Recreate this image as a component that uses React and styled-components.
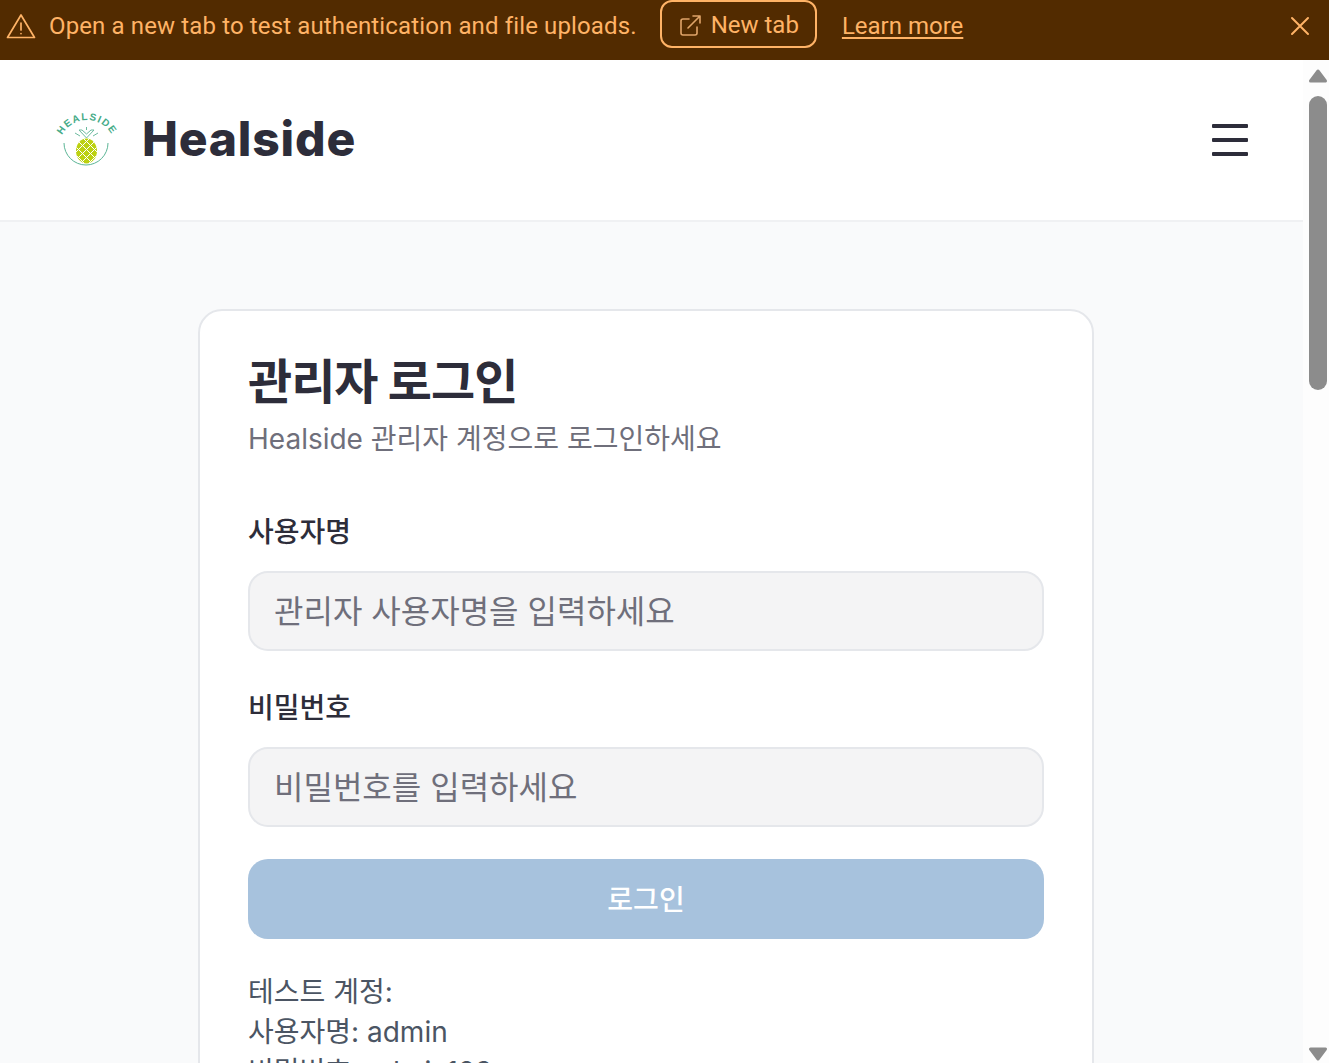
import React from "react";
import styled, { createGlobalStyle } from "styled-components";

const Global = createGlobalStyle`
  html, body { margin: 0; padding: 0; height: 100%; overflow: hidden; }
  * { box-sizing: border-box; }
  body { font-family: Inter, "Noto Sans CJK KR", sans-serif; }
`;

const Page = styled.div`
  display: flex;
  flex-direction: column;
  height: 1063px;
  overflow: hidden;
`;

const Banner = styled.div`
  flex: none;
  display: flex;
  align-items: center;
  height: 60px;
  padding: 0 19px 8px 6px;
  background: #522b00;
  color: #ffb366;
  font-family: Roboto, sans-serif;
  font-size: 24px;
`;

const BannerText = styled.span`
  margin-left: 13px;
  letter-spacing: 0.13px;
`;

const NewTab = styled.div`
  display: flex;
  align-items: center;
  align-self: flex-start;
  gap: 10px;
  height: 48px;
  margin-left: 23px;
  padding: 2px 16px 0 18px;
  border: 2px solid #ffb366;
  border-radius: 12px;
`;

const LearnMore = styled.a`
  margin-left: 25px;
  color: inherit;
  text-decoration: underline;
  text-underline-offset: 3px;
`;

const CloseBtn = styled.div`
  display: flex;
  margin-left: auto;
`;

const Frame = styled.div`
  flex: 1;
  display: flex;
  min-height: 0;
`;

const Content = styled.div`
  flex: 1;
  min-width: 0;
  overflow: hidden;
  background: #f9fafb;
`;

const Header = styled.header`
  display: flex;
  align-items: center;
  justify-content: space-between;
  height: 162px;
  padding: 0 54px 2px 54px;
  background: #fff;
  border-bottom: 2px solid #f0f1f3;
`;

const Brand = styled.div`
  display: flex;
  align-items: center;
  gap: 24px;
`;

const BrandName = styled.span`
  font-size: 48px;
  font-weight: 800;
  letter-spacing: 0.8px;
  line-height: 56px;
  color: #2d2d3a;
`;

const Burger = styled.div`
  display: flex;
  flex-direction: column;
  gap: 10px;
  width: 36px;
  margin: 2px 1px 0 0;
  span {
    height: 4px;
    background: #2d2d3a;
    border-radius: 1px;
  }
`;

const Main = styled.main`
  display: flex;
  padding: 87px 0 0 198px;
`;

const Card = styled.div`
  width: 896px;
  padding: 41px 48px 48px;
  background: #fff;
  border: 2px solid #e5e7eb;
  border-radius: 24px;
`;

const Title = styled.h1`
  margin: 0 0 7px;
  font-size: 48px;
  line-height: 60px;
  font-weight: 700;
  letter-spacing: -1px;
  color: #2d2d3a;
`;

const Subtitle = styled.p`
  margin: 0 0 53px;
  font-size: 28px;
  line-height: 40px;
  color: #6f6f7b;
`;

const Label = styled.label`
  display: block;
  margin-bottom: 19px;
  font-size: 28px;
  line-height: 40px;
  font-weight: 500;
  color: #2d2d3a;
`;

const Input = styled.input`
  display: block;
  width: 100%;
  height: 80px;
  margin-bottom: 37px;
  padding: 0 24px;
  background: #f4f4f5;
  border: 2px solid #e5e7eb;
  border-radius: 20px;
  font-family: inherit;
  font-size: 32px;
  outline: none;
  &::placeholder { color: #6f6f7b; opacity: 1; }
`;

const Submit = styled.button`
  display: block;
  width: 100%;
  height: 80px;
  margin-top: -5px;
  padding-bottom: 3px;
  background: #a7c2dd;
  border: 0;
  border-radius: 20px;
  color: #fff;
  font-family: inherit;
  font-size: 28px;
  font-weight: 500;
`;

const Hint = styled.div`
  margin-top: 33px;
  font-size: 28px;
  line-height: 40px;
  color: #4b5563;
`;

const Rail = styled.div`
  flex: none;
  width: 26px;
  display: flex;
  flex-direction: column;
  align-items: center;
  padding: 8px 0 1px 4px;
  background: #fdfdfd;
`;

const Thumb = styled.div`
  width: 18px;
  height: 294px;
  margin-top: 12px;
  background: #8c8c8c;
  border-radius: 9px;
`;

const Arrow = styled.svg`
  display: block;
  flex: none;
`;

const Spacer = styled.div`
  flex: 1;
`;

const LogoMark = styled.svg`
  display: block;
  overflow: visible;
`;

function Logo() {
  return (
    <LogoMark width="64" height="64" viewBox="0 0 64 64" aria-hidden="true">
      <defs>
        <path id="logo-arc" d="M5 41 A27 27 0 0 1 61 41" />
        <clipPath id="fruit">
          <ellipse cx="32.5" cy="44" rx="10.5" ry="12.5" />
        </clipPath>
      </defs>
      <text fontFamily="Liberation Sans, sans-serif" fontSize="10" fontWeight="700" fill="#46ab88" letterSpacing="1.3" textAnchor="middle">
        <textPath href="#logo-arc" startOffset="50%">HEALSIDE</textPath>
      </text>
      <path d="M10 36 A22 22 0 0 0 54 36" fill="none" stroke="#5cb596" strokeWidth="1" />
      <path d="M32.5 31 L25 23 L28 23 L32.5 27 L37 23 L40 23 Z M26 29 L21 26 M39 29 L44 26 M32.5 23 V20" fill="none" stroke="#6dbb9f" strokeWidth="1" />
      <ellipse cx="32.5" cy="44" rx="10.5" ry="12.5" fill="#bcd110" />
      <g clipPath="url(#fruit)" stroke="#fff" strokeWidth="1">
        <path d="M14 40 L32 58 M14 32 L42 60 M20 30 L48 58 M28 30 L50 52 M51 40 L33 58 M51 32 L23 60 M45 30 L17 58 M37 30 L15 52" />
      </g>
    </LogoMark>
  );
}

export default function App() {
  return (
    <Page>
      <Global />
      <Banner>
        <svg width="30" height="26" viewBox="0 0 30 26" fill="none" stroke="#ffb366" strokeWidth="1.7" strokeLinejoin="round" strokeLinecap="round">
          <path d="M15 2 L28.5 24.5 H1.5 Z" />
          <path d="M15 10 V17" />
          <path d="M15 20.5 V20.6" />
        </svg>
        <BannerText>Open a new tab to test authentication and file uploads.</BannerText>
        <NewTab>
          <svg width="21" height="21" viewBox="0 0 21 21" fill="none" stroke="#e0a468" strokeWidth="1.6" strokeLinecap="round" strokeLinejoin="round">
            <path d="M9 4 H3 A2 2 0 0 0 1 6 V18 A2 2 0 0 0 3 20 H15 A2 2 0 0 0 17 18 V12" />
            <path d="M8 13 L20 1 M13 1 H20 V8" />
          </svg>
          New tab
        </NewTab>
        <LearnMore href="#">Learn more</LearnMore>
        <CloseBtn>
          <svg width="20" height="20" viewBox="0 0 20 20" stroke="#ffb366" strokeWidth="2" strokeLinecap="round">
            <path d="M2 2 L18 18 M18 2 L2 18" />
          </svg>
        </CloseBtn>
      </Banner>
      <Frame>
        <Content>
          <Header>
            <Brand>
              <Logo />
              <BrandName>Healside</BrandName>
            </Brand>
            <Burger>
              <span />
              <span />
              <span />
            </Burger>
          </Header>
          <Main>
            <Card>
              <Title>관리자 로그인</Title>
              <Subtitle>Healside 관리자 계정으로 로그인하세요</Subtitle>
              <Label>사용자명</Label>
              <Input placeholder="관리자 사용자명을 입력하세요" />
              <Label>비밀번호</Label>
              <Input type="password" placeholder="비밀번호를 입력하세요" />
              <Submit>로그인</Submit>
              <Hint>
                테스트 계정:
                <br />
                사용자명: admin
                <br />
                비밀번호: admin123
              </Hint>
            </Card>
          </Main>
        </Content>
        <Rail>
          <Arrow width="20" height="16" viewBox="0 0 20 16">
            <path d="M10 3 L17.5 13 H2.5 Z" fill="#8c8c8c" stroke="#8c8c8c" strokeWidth="3" strokeLinejoin="round" />
          </Arrow>
          <Thumb />
          <Spacer />
          <Arrow width="20" height="16" viewBox="0 0 20 16">
            <path d="M10 13 L17.5 3 H2.5 Z" fill="#8c8c8c" stroke="#8c8c8c" strokeWidth="3" strokeLinejoin="round" />
          </Arrow>
        </Rail>
      </Frame>
    </Page>
  );
}
